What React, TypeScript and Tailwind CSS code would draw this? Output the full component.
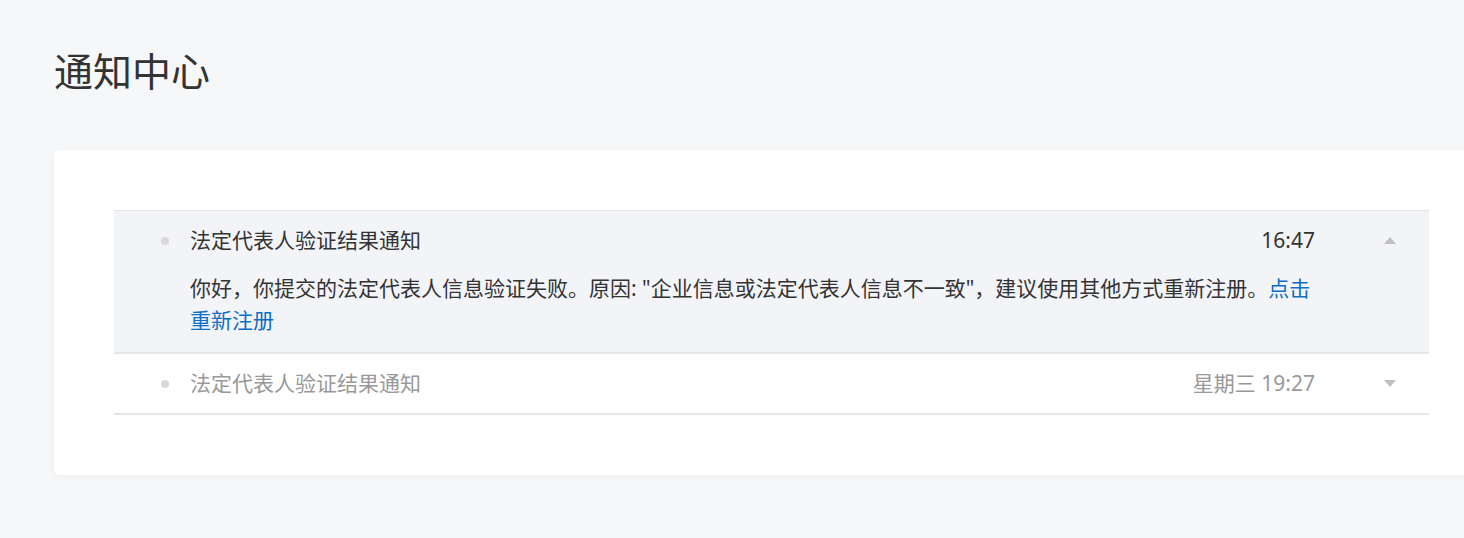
import React from 'react';

interface Notice {
  title: string;
  time: string;
  open: boolean;
}

const notices: Notice[] = [
  { title: '法定代表人验证结果通知', time: '16:47', open: true },
  { title: '法定代表人验证结果通知', time: '星期三 19:27', open: false },
];

function Caret({ up }: { up: boolean }) {
  return (
    <svg width="12" height="7" viewBox="0 0 12 7" className="block">
      {up ? <path d="M6 0 L12 7 L0 7 Z" fill="#bfbfbf" /> : <path d="M0 0 L12 0 L6 7 Z" fill="#bfbfbf" />}
    </svg>
  );
}

function NoticeRow({ notice }: { notice: Notice }) {
  return (
    <div className={`border-b-2 border-[#e6e6ea] ${notice.open ? 'bg-[#f3f4f8]' : 'bg-white'}`}>
      {/* header */}
      <div className="flex h-[59px] items-center pl-[47px] pr-[33px]">
        <span className="h-[8px] w-[8px] rounded-full bg-[#d9d9d9]" />
        <span className={`ml-[21px] flex-1 ${notice.open ? 'text-[#333]' : 'text-[#999]'}`}>{notice.title}</span>
        <span className={`${notice.open ? 'text-[#333]' : 'text-[#999]'}`}>{notice.time}</span>
        <span className="ml-[69px]">
          <Caret up={notice.open} />
        </span>
      </div>

      {notice.open && (
        <div className="pb-[16px] pl-[76px] pr-[114px] pt-[2px] leading-[32px] text-[#333]">
          你好，你提交的法定代表人信息验证失败。原因: "企业信息或法定代表人信息不一致"，建议使用其他方式重新注册。
          <a className="text-[#0b6fc6]">点击重新注册</a>
        </div>
      )}
    </div>
  );
}

export default function App() {
  return (
    <div
      className="h-[538px] w-screen overflow-hidden bg-[#f6f7f9] pl-[54px] pt-[42px]"
      style={{ fontFamily: '"Noto Sans", "Noto Sans CJK SC", sans-serif' }}
    >
      <h1 className="text-[39px] font-normal leading-[58px] text-[#333]">通知中心</h1>

      <div className="mt-[50px] w-[1435px] rounded-[6px] bg-white p-[60px] shadow-[0_2px_8px_rgba(0,0,0,0.04)]">
        <div className="border-t border-[#e3e4e8] text-[21px]">
          {notices.map((n, i) => (
            <NoticeRow key={i} notice={n} />
          ))}
        </div>
      </div>
    </div>
  );
}
